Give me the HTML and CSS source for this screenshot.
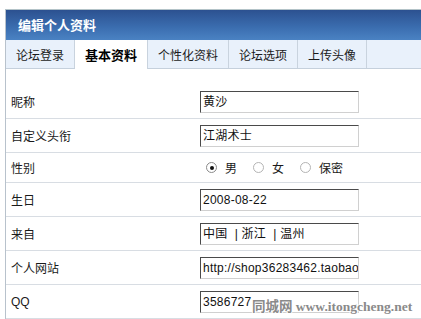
FILE: index.html
```html
<!DOCTYPE html>
<html lang="zh-CN">
<head>
<meta charset="utf-8">
<title>编辑个人资料</title>
<link rel="stylesheet" href="styles.css">
</head>
<body>
<div class="panel">
  <div class="panel-head">编辑个人资料</div>
  <div class="tabs">
    <span class="tab">论坛登录</span>
    <span class="tab active">基本资料</span>
    <span class="tab">个性化资料</span>
    <span class="tab">论坛选项</span>
    <span class="tab">上传头像</span>
  </div>
  <div class="form">
    <div class="row"><span class="label">昵称</span><span class="field"><span class="input">黄沙</span></span></div>
    <div class="row"><span class="label">自定义头衔</span><span class="field"><span class="input">江湖术士</span></span></div>
    <div class="row short"><span class="label">性别</span>
      <span class="field radios">
        <span class="radio checked"></span><span class="rlabel">男</span>
        <span class="radio"></span><span class="rlabel">女</span>
        <span class="radio"></span><span class="rlabel">保密</span>
      </span>
    </div>
    <div class="row"><span class="label">生日</span><span class="field"><span class="input">2008-08-22</span></span></div>
    <div class="row"><span class="label">来自</span><span class="field"><span class="input pre">中国  | 浙江  | 温州</span></span></div>
    <div class="row"><span class="label">个人网站</span><span class="field"><span class="input">http://shop36283462.taobao</span></span></div>
    <div class="row"><span class="label latin">QQ</span><span class="field"><span class="input">3586727</span></span></div>
  </div>
</div>
<div class="watermark">同城网 www.itongcheng.net</div>
</body>
</html>
```
FILE: styles.css
```css
html, body {
  margin: 0;
  padding: 0;
  width: 421px;
  height: 319px;
  overflow: hidden;
  background: #ffffff;
}
body {
  position: relative;
  font-family: "Liberation Sans", "Noto Sans CJK SC", sans-serif;
  font-size: 12px;
  color: #1a1a1a;
}
.panel {
  margin: 9px 0 0 5px;
  width: 416px;
  border-top: 1px solid #b3c3c8;
  border-left: 1px solid #b8c2cc;
}
.panel-head {
  height: 30px;
  line-height: 30px;
  padding-left: 12px;
  background: linear-gradient(#2c5190, #3a6cae 55%, #4a82c3);
  color: #ffffff;
  font-weight: bold;
  font-size: 13px;
  font-family: "Noto Sans CJK SC", sans-serif;
}
.tabs {
  display: flex;
  height: 28px;
  background: #e9f1fb;
  border-bottom: 1px solid #c5d0dc;
}
.tab {
  display: flex;
  align-items: center;
  padding: 0 10px;
  border-right: 1px solid #c9d3de;
  font-family: "Noto Sans CJK SC", sans-serif;
  font-size: 12px;
  color: #1a1a1a;
}
.tab.active {
  background: #ffffff;
  font-weight: bold;
  font-size: 13px;
  height: 29px;
  color: #000;
}
.form {
  padding-top: 16px;
}
.row {
  display: grid;
  grid-template-columns: 194px 1fr;
  align-items: center;
  height: 33px;
  border-bottom: 1px solid #d8dde3;
}
.row.short {
  height: 29px;
}
.label {
  padding-left: 5px;
  font-family: "Noto Sans CJK SC", sans-serif;
}
.label.latin {
  font-family: "Liberation Sans", sans-serif;
}
.field {
  display: flex;
  align-items: center;
}
.input {
  box-sizing: border-box;
  width: 159px;
  height: 22px;
  line-height: 20px;
  padding-left: 2px;
  border: 1px solid;
  border-color: #4a4a4a #d0d0d0 #d0d0d0 #4a4a4a;
  overflow: hidden;
  white-space: nowrap;
  letter-spacing: 0.25px;
  color: #111;
}
.input.pre {
  white-space: pre;
}
.radios {
  padding-left: 6px;
}
.radio {
  box-sizing: border-box;
  width: 11px;
  height: 11px;
  border-radius: 50%;
  border: 1px solid #b4b4b4;
  background: #ffffff;
  display: flex;
  align-items: center;
  justify-content: center;
  margin-right: 8px;
}
.radio.checked {
  border-color: #8a8a8a;
}
.radio.checked::after {
  content: "";
  width: 4px;
  height: 4px;
  border-radius: 50%;
  background: #111;
}
.rlabel {
  margin-right: 16px;
  font-family: "Noto Sans CJK SC", sans-serif;
}
.watermark {
  position: absolute;
  left: 252px;
  top: 295px;
  font-family: "Liberation Serif", "Noto Sans CJK SC", serif;
  font-weight: bold;
  font-size: 13.5px;
  color: #8a8a8a;
  text-shadow: 1px 0 #fff, -1px 0 #fff, 0 1px #fff, 0 -1px #fff;
  white-space: nowrap;
}
```
